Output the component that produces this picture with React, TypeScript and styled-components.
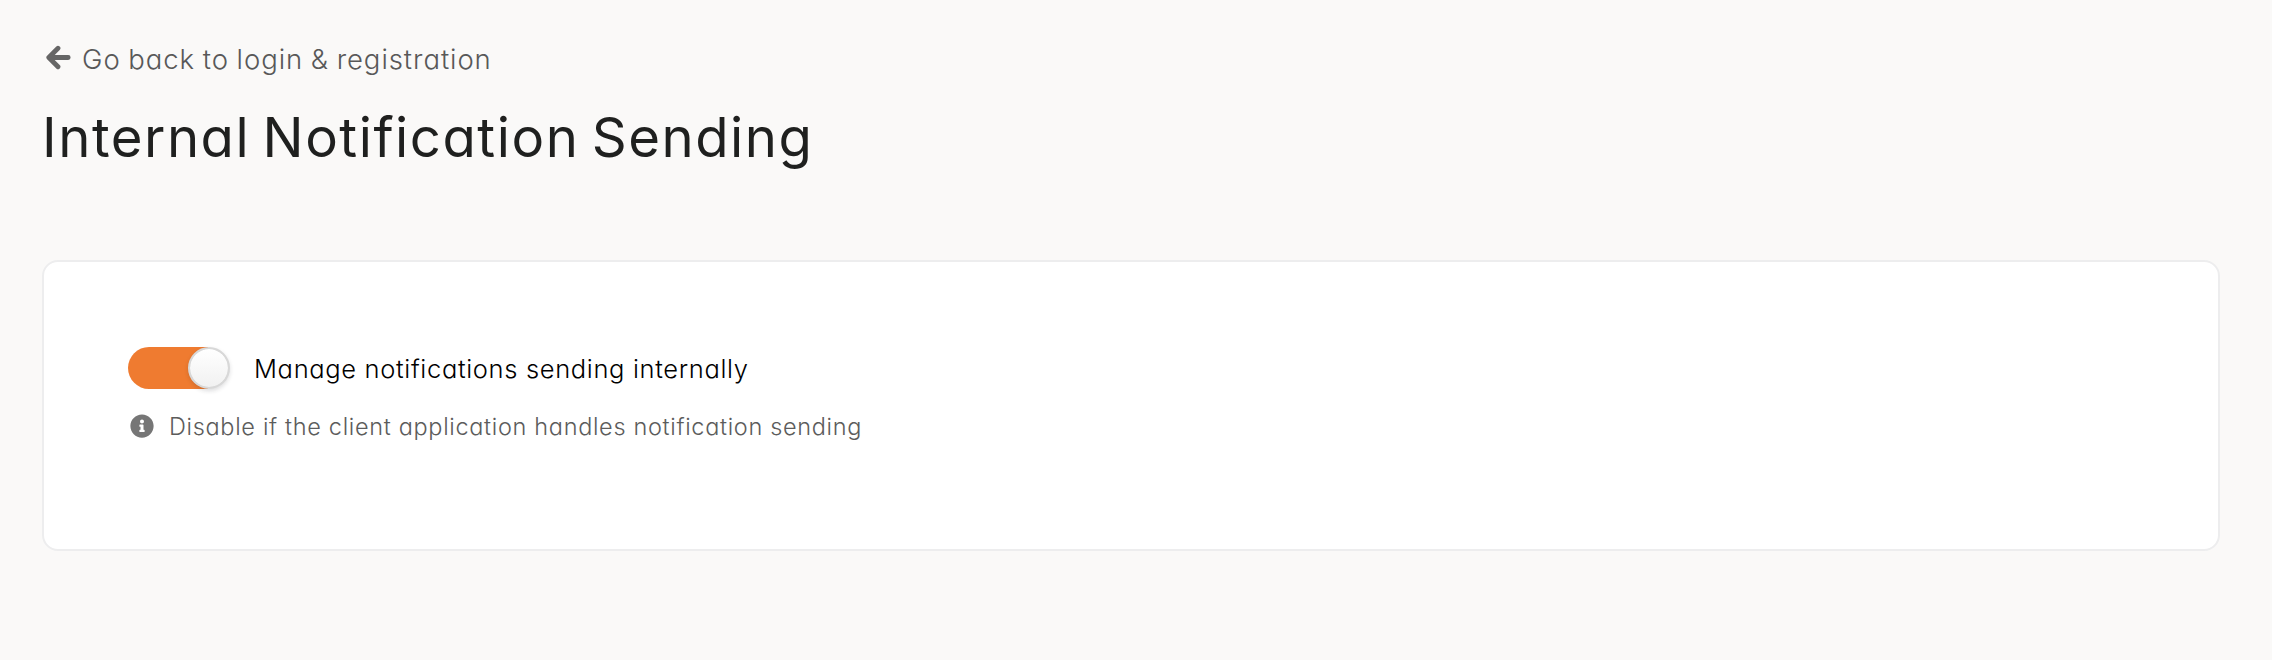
import React, { useState } from "react";
import styled, { createGlobalStyle } from "styled-components";
import { FaInfoCircle } from "react-icons/fa";

const GlobalStyle = createGlobalStyle`
  body {
    margin: 0;
    background: #faf9f8;
    font-family: Inter, "Liberation Sans", sans-serif;
    font-feature-settings: "cv11" 1, "ss03" 1;
  }
`;

const Page = styled.main`
  box-sizing: border-box;
  min-height: 660px;
  padding: 40px 52px 0 42px;
`;

const BackLink = styled.a`
  display: flex;
  align-items: center;
  width: max-content;
  height: 36px;
  color: #585858;
  font-size: 27.5px;
  font-weight: 300;
  line-height: 36px;
  letter-spacing: 0.94px;
  word-spacing: -1px;
  text-decoration: none;
  white-space: nowrap;
`;

const ArrowIcon = styled.svg`
  width: 26px;
  height: 26px;
  margin: 0 11px 0 3px;
  color: #666;
`;

const BackText = styled.span`
  padding-top: 1px;
`;

const Title = styled.h1`
  margin: 29px 0 0;
  height: 65px;
  color: #1f201f;
  font-size: 54.5px;
  font-weight: 400;
  line-height: 64px;
  letter-spacing: 1.52px;
  word-spacing: -4.5px;
  white-space: nowrap;
`;

const Card = styled.section`
  box-sizing: border-box;
  height: 291px;
  margin-top: 90px;
  padding: 85px 84px;
  border: 2px solid #ededee;
  border-radius: 16px;
  background: #fff;
`;

const SettingRow = styled.label`
  display: flex;
  align-items: center;
  height: 42px;
  cursor: pointer;
`;

const Track = styled.button<{ $on: boolean }>`
  display: flex;
  justify-content: ${({ $on }) => ($on ? "flex-end" : "flex-start")};
  width: 102px;
  height: 42px;
  margin: 0 24px 0 0;
  padding: 0;
  border: 0;
  border-radius: 21px;
  background: ${({ $on }) =>
    $on ? "linear-gradient(90deg, #ef7b30 80px, transparent 80px)" : "#d5d5d5"};
  cursor: pointer;
`;

const Thumb = styled.span`
  width: 42px;
  height: 42px;
  box-sizing: border-box;
  border: 2px solid #d8d8d8;
  border-radius: 50%;
  background: linear-gradient(#fff, #f1f1f1) padding-box, #d8d8d8;
  box-shadow: 0 2px 4px rgba(34, 36, 38, 0.15);
`;

const SettingText = styled.span`
  padding-top: 1px;
  color: #000;
  font-size: 25.5px;
  font-weight: 300;
  line-height: 34px;
  letter-spacing: 0.66px;
  white-space: nowrap;
`;

const Hint = styled.p`
  display: flex;
  align-items: center;
  height: 34px;
  margin: 21px 0 0;
  padding-left: 2px;
  color: #5c5c5c;
  font-size: 23.5px;
  font-weight: 300;
  line-height: 34px;
  letter-spacing: 0.67px;
  white-space: nowrap;
`;

const InfoIcon = styled(FaInfoCircle)`
  width: 24px;
  height: 24px;
  margin: 0 15px 2px 0;
  color: #767676;
`;

export default function App() {
  const [internal, setInternal] = useState(true);
  return (
    <>
      <GlobalStyle />
      <Page>
        <BackLink href="#">
          <ArrowIcon viewBox="0 0 26 26" aria-hidden="true">
            <path
              d="M13 3.2 3.8 12.5 13 21.8M4.4 12.5H23.2"
              fill="none"
              stroke="currentColor"
              strokeWidth="4.8"
              strokeLinecap="round"
              strokeLinejoin="round"
            />
          </ArrowIcon>
          <BackText>Go back to login &amp; registration</BackText>
        </BackLink>
        <Title>Internal Notification Sending</Title>
        <Card>
          <SettingRow>
            <Track
              type="button"
              role="switch"
              aria-checked={internal}
              $on={internal}
              onClick={() => setInternal(!internal)}
            >
              <Thumb />
            </Track>
            <SettingText>Manage notifications sending internally</SettingText>
          </SettingRow>
          <Hint>
            <InfoIcon />
            <span>Disable if the client application handles notification sending</span>
          </Hint>
        </Card>
      </Page>
    </>
  );
}
